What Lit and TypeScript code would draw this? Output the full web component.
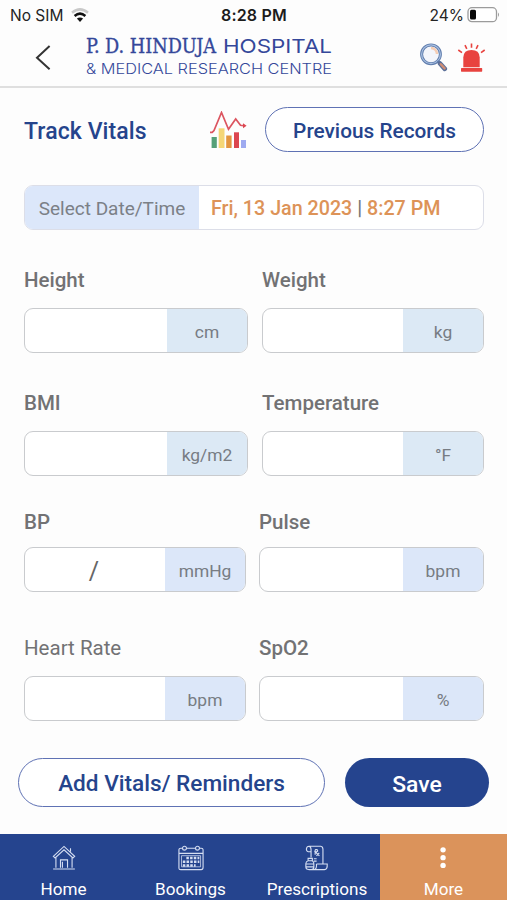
import { LitElement, html, css, svg } from "lit";
import { customElement, property } from "lit/decorators.js";

const homeIcon = svg`
  <path d="M2.5 12.2 L14 1.5 L25.5 12.2 L23.6 14 L14 5.2 L4.4 14 Z"/>
  <path d="M5.3 13.5 V24.5 M22.7 13.5 V24.5 M2.3 25.8 H25.7 M10.2 24.5 V16 H17.8 V24.5 M12.3 24.5 V18 M21 3.5 V7.2"/>`;

const bookingsIcon = svg`
  <path d="M5 3.5 H3 Q1 3.5 1 5 V25 Q1 26.5 3 26.5 H25 Q27 26.5 27 24 V5 Q27 3.5 25 3.5 H23 M9 3.5 H19 M1 9 H27"/>
  <circle cx="7" cy="3.4" r="2.1"/><circle cx="21" cy="3.4" r="2.1"/>
  <path d="M3.8 11.5 H24.3 V23.5 H3.8 Z" stroke-width=".8"/>
  <path d="M9 14 H23 M5.2 18 H23 M5.2 22 H19" stroke-width="2.7" stroke-dasharray="2.7 1.3"/>`;

const prescriptionsIcon = svg`
  <path d="M7.4 7.2 H4.6 Q2.4 6.8 2.6 4.2 Q3 1.4 5.4 1.4 H18 Q20.4 1.8 20.4 4.6 V20.4 M5.4 1.4 Q7.6 2 7.6 5 V13.5"/>
  <path d="M12 5 V10.6 M12 5 H14 Q15.6 6.5 13.8 7.4 H12 L16.6 11.8 M16.4 8.4 L13.4 11.8"/>
  <path d="M13.4 20.4 H25 Q25.4 26.4 22 26.5 H5 M13.4 20.4 Q14 25.6 11 26.4"/>
  <path d="M10.6 14.8 H13.6 M10.6 17.4 H13.6"/>
  <path d="M4.4 17 V14.4 H9 V17 Q11 18.4 10.6 21 V24 Q10.4 26.4 8 26.4 H5 Q2 26.2 2 23.6 V20 Q2.2 17.6 4.4 17 H9 M2 20.4 H10.6 M2.2 23.6 H10.4"/>`;

const moreIcon = svg`
  <g fill="#fff" stroke="none"><circle cx="13" cy="5.2" r="2.9"/><circle cx="13" cy="13.6" r="2.9"/><circle cx="13" cy="22" r="2.9"/></g>`;

@customElement("vital-field")
class VitalField extends LitElement {
  @property() label = "";
  @property() unit = "";
  @property() separator = "";

  static styles = css`
    :host { display: flex; flex-direction: column; min-width: 0; }
    .label {
      height: var(--label-height, 43px);
      line-height: 24px;
      font-size: 20.5px;
      font-weight: var(--label-weight, 500);
      color: #727274;
      white-space: nowrap;
    }
    .box {
      box-sizing: border-box;
      height: 45px;
      display: flex;
      border: 1px solid #c9cbce;
      border-radius: 9px;
      overflow: hidden;
      background: #fff;
    }
    .value {
      flex: 1;
      display: flex;
      align-items: center;
      justify-content: center;
      color: #666;
      font-size: 25px;
      padding: 3px 2px 0 0;
    }
    .unit {
      width: 80px;
      display: flex;
      align-items: center;
      justify-content: center;
      background: var(--unit-bg, #dce9f5);
      color: #777c83;
      font-size: 17.4px;
      padding-top: 2px;
      box-sizing: border-box;
    }
  `;

  render() {
    return html`
      <div class="label">${this.label}</div>
      <div class="box">
        <div class="value">${this.separator}</div>
        <div class="unit">${this.unit}</div>
      </div>`;
  }
}

@customElement("app-root")
class AppRoot extends LitElement {
  static styles = css`
    :host {
      display: flex;
      flex-direction: column;
      box-sizing: border-box;
      width: 507px;
      height: 900px;
      overflow: hidden;
      background: #fdfdfd;
      font-family: Roboto, "Liberation Sans", sans-serif;
    }
    svg { display: block; flex: none; }
    .status {
      height: 30px;
      display: grid;
      grid-template-columns: 1fr auto 1fr;
      align-items: center;
      padding: 0 7px 0 10px;
      font-family: Inter, sans-serif;
      font-size: 15.5px;
      color: #242424;
      box-sizing: border-box;
    }
    .status-side { display: flex; align-items: center; gap: 8px; }
    .status-end { justify-content: flex-end; gap: 3px; }
    .clock { font-weight: 600; color: #1c1c1c; font-size: 16px; letter-spacing: 0.2px; margin-right: 2px; }
    .header {
      height: 58px;
      box-sizing: border-box;
      border-bottom: 2px solid #dfdfdf;
      display: flex;
      align-items: flex-start;
      padding-left: 34px;
    }
    .back { margin-top: 14px; }
    .logo { margin: 0 0 0 33px; }
    .search { margin: 12px 0 0 85px; }
    .alarm { margin: 12px 0 0 9px; }
    .toolbar {
      display: flex;
      align-items: center;
      margin: 19px 23px 0 24px;
      height: 45px;
    }
    .title {
      flex: 1;
      color: #25448c;
      font-size: 23px;
      font-weight: 500;
      letter-spacing: 0.1px;
      padding-top: 3px;
    }
    .pill {
      box-sizing: border-box;
      display: flex;
      align-items: center;
      justify-content: center;
      border: 1.5px solid #5f72b4;
      border-radius: 26px;
      background: #fff;
      color: #25448c;
      font-weight: 500;
      white-space: nowrap;
      padding-top: 2px;
    }
    .records { width: 219px; height: 45px; margin-left: 18px; font-size: 20.8px; }
    .date {
      margin: 33px 23px 0 24px;
      height: 45px;
      box-sizing: border-box;
      border: 1px solid #dcdee8;
      border-radius: 9px;
      display: flex;
      overflow: hidden;
      background: #fff;
      font-size: 19.7px;
      line-height: 46px;
      white-space: nowrap;
    }
    .date-label {
      width: 174px;
      text-align: center;
      background: #dce7fa;
      color: #7b8087;
      font-size: 19px;
    }
    .date-value { padding-left: 12px; color: #dd9358; font-weight: 500; }
    .bar { color: #777; }
    .row { display: grid; grid-template-columns: 224px 222px; column-gap: 14px; margin-left: 24px; }
    .row-a { margin-top: 38px; --label-height: 40px; }
    .row-b { margin-top: 38px; --label-height: 40px; }
    .row-c, .row-d { grid-template-columns: 222px 225px; column-gap: 13px; --unit-bg: #dce7f9; }
    .row-c { margin-top: 34px; --label-height: 37px; }
    .row-d { margin-top: 44px; --label-height: 40px; }
    .light { --label-weight: 400; }
    .actions { display: flex; margin: 37px 18px 0; gap: 20px; }
    .add { width: 307px; height: 49px; font-size: 22.6px; padding-top: 2px; }
    .save {
      width: 144px;
      height: 49px;
      border: none;
      background: #25448e;
      color: #fff;
      font-size: 22.9px;
      padding-top: 3px;
    }
    .nav {
      margin-top: auto;
      height: 66px;
      display: grid;
      grid-template-columns: 127px 127px 126px 127px;
      background: #25448e;
      color: #fff;
    }
    .tab {
      display: flex;
      flex-direction: column;
      align-items: center;
      padding-top: 11px;
      font-size: 17.1px;
      line-height: 20px;
    }
    .tab svg { margin-bottom: 8px; }
    .active { background: #db935b; }
  `;

  private tab(icon: unknown, label: string, active = false) {
    return html`<div class=${active ? "tab active" : "tab"}>
      <svg width="26" height="26" viewBox="0 0 28 28" fill="none" stroke="#d5def2" stroke-width="1.2">${icon}</svg>
      <span>${label}</span>
    </div>`;
  }

  render() {
    return html`
      <div class="status">
        <div class="status-side">
          <span>No SIM</span>
          <svg width="18" height="15" viewBox="0 0 18 15" fill="none">
            <path d="M1 4.8 Q9 -2 17 4.8" stroke="#c9c9c9" stroke-width="2.5"/>
            <path d="M3.6 8 Q9 3.2 14.4 8" stroke="#111" stroke-width="2.5"/>
            <path d="M9 14 L5.9 10.6 Q9 8.2 12.1 10.6 Z" fill="#111"/>
          </svg>
        </div>
        <span class="clock">8:28 PM</span>
        <div class="status-side status-end">
          <span>24%</span>
          <svg width="33" height="17" viewBox="0 0 33 17">
            <rect x="1" y=".7" width="28.5" height="14" rx="4" fill="#fff" stroke="#9b9b9b" stroke-width="1.3"/>
            <rect x="3" y="2.8" width="6" height="9.8" rx="1.5" fill="#080808"/>
            <path d="M31 5.5 Q33 7.7 31 9.9 Z" fill="#9b9b9b"/>
          </svg>
        </div>
      </div>

      <div class="header">
        <svg class="back" width="18" height="27" viewBox="0 0 18 27" fill="none" stroke="#333" stroke-width="2">
          <path d="M15.6 2 L3 13.7 L15.6 25.3"/>
        </svg>
        <svg class="logo" width="249" height="50" viewBox="0 0 249 50" fill="#34479a">
          <text x="1" y="23.3" font-family="DejaVu Serif, serif" font-stretch="condensed" font-size="19.5" stroke="#34479a" stroke-width=".35" textLength="130" lengthAdjust="spacingAndGlyphs">P. D. HINDUJA</text>
          <text x="138" y="23.3" font-family="Inter, sans-serif" font-size="19.3" textLength="109" lengthAdjust="spacingAndGlyphs">HOSPITAL</text>
          <text x="1" y="43.7" font-family="Inter, sans-serif" font-size="13.8" font-weight="300" textLength="246" lengthAdjust="spacingAndGlyphs">&amp; MEDICAL RESEARCH CENTRE</text>
        </svg>
        <svg class="search" width="29" height="31" viewBox="0 0 29 31">
          <circle cx="12" cy="12.3" r="9.4" fill="#f3f5fb" stroke="#5f7cac" stroke-width="3"/>
          <circle cx="12" cy="12.3" r="9.4" fill="none" stroke="#a9c0e2" stroke-width="1.2"/>
          <path d="M12 6 Q17.5 6.3 18 12" fill="none" stroke="#f5cdb4" stroke-width="2.4"/>
          <path d="M18.7 19 L21 21.4" stroke="#5f7cac" stroke-width="2.5"/>
          <path d="M21 21.5 L25.8 26.9" stroke="#5a6f98" stroke-width="4.6" stroke-linecap="round"/>
          <path d="M21.8 22.2 L25.6 26.4" stroke="#cf8d74" stroke-width="2.4" stroke-linecap="round"/>
        </svg>
        <svg class="alarm" width="29" height="31" viewBox="0 0 29 31" fill="#e8433f">
          <path d="M6.3 25.3 V15.4 Q6.5 8 14.5 8 Q22.5 8 22.7 15.4 V25.3 Z"/>
          <rect x="4" y="26.1" width="21.2" height="3.6" rx=".6"/>
          <path d="M14.5 1.6 V5.8 M8 3.2 L9.8 6.8 M21 3.2 L19.2 6.8 M1.3 8 L5 10.6 M27.7 8 L24 10.6" stroke="#e8433f" stroke-width="1.6"/>
        </svg>
      </div>

      <div class="toolbar">
        <div class="title">Track Vitals</div>
        <svg width="37" height="38" viewBox="0 0 37 38">
          <rect x="1.6" y="26" width="5.2" height="11" fill="#55a078"/>
          <rect x="8.7" y="17.3" width="5.8" height="19.7" fill="#f5d676"/>
          <rect x="16.2" y="24.5" width="5.4" height="12.5" fill="#e3943e"/>
          <rect x="24" y="21.3" width="5" height="15.7" fill="#dc4650"/>
          <rect x="31" y="29" width="5" height="8" fill="#9eaaf0"/>
          <path d="M0 21.4 H2.2 L4 19.5 L11.5 1.5 L18.5 18.3 L25.7 8 L30.5 14.3 L35 14.8" fill="none" stroke="#dc5560" stroke-width="1.7"/>
          <path d="M33 12.3 L36.6 14.8 L33 17.2 Z" fill="#dc4650"/>
        </svg>
        <div class="pill records">Previous Records</div>
      </div>

      <div class="date">
        <div class="date-label">Select Date/Time</div>
        <div class="date-value">Fri, 13 Jan 2023 <span class="bar">|</span> 8:27 PM</div>
      </div>

      <div class="row row-a">
        <vital-field label="Height" unit="cm"></vital-field>
        <vital-field label="Weight" unit="kg"></vital-field>
      </div>
      <div class="row row-b">
        <vital-field label="BMI" unit="kg/m2"></vital-field>
        <vital-field label="Temperature" unit="°F"></vital-field>
      </div>
      <div class="row row-c">
        <vital-field label="BP" unit="mmHg" separator="/"></vital-field>
        <vital-field label="Pulse" unit="bpm"></vital-field>
      </div>
      <div class="row row-d">
        <vital-field class="light" label="Heart Rate" unit="bpm"></vital-field>
        <vital-field label="SpO2" unit="%"></vital-field>
      </div>

      <div class="actions">
        <div class="pill add">Add Vitals/ Reminders</div>
        <div class="pill save">Save</div>
      </div>

      <div class="nav">
        ${this.tab(homeIcon, "Home")}
        ${this.tab(bookingsIcon, "Bookings")}
        ${this.tab(prescriptionsIcon, "Prescriptions")}
        ${this.tab(moreIcon, "More", true)}
      </div>`;
  }
}
